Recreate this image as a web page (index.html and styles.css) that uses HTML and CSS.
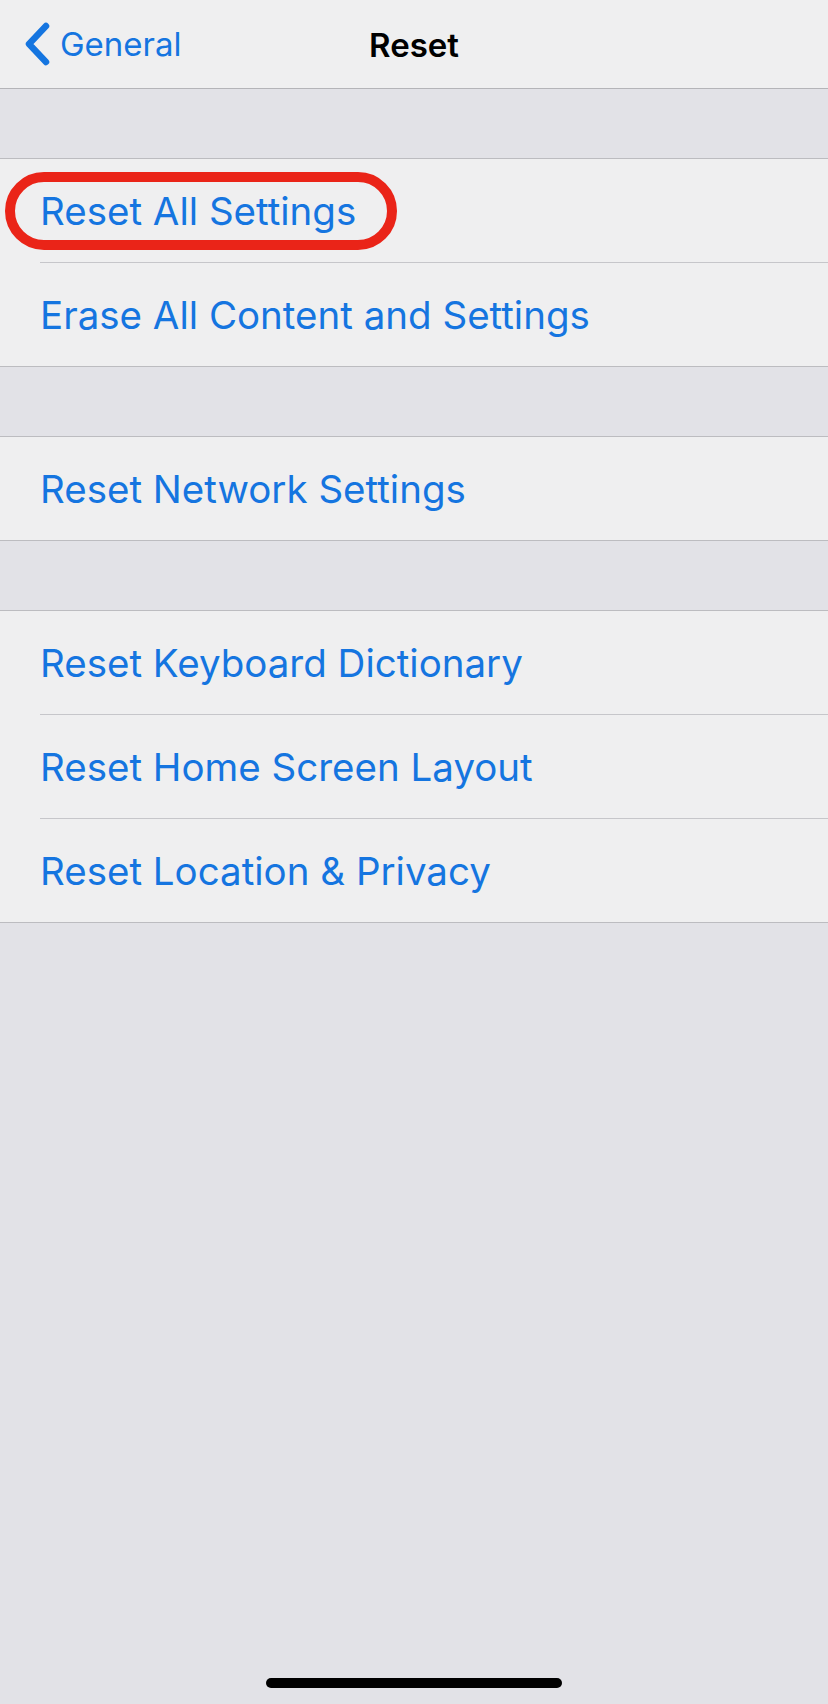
FILE: index.html
```html
<!DOCTYPE html>
<html lang="en">
<head>
    <meta charset="UTF-8">
    <meta name="viewport" content="width=device-width, initial-scale=1.0">
    <title>Reset</title>
    <link rel="stylesheet" href="styles.css">
</head>
<body>

    <div class="navbar">
        <div class="back">
            <svg class="chevron" width="28" height="44" viewBox="0 0 28 44">
                <path d="M22 4 L5 22 L22 40" fill="none" stroke="#1575e0" stroke-width="6.5" stroke-linecap="round" stroke-linejoin="round"/>
            </svg>
            <span>General</span>
        </div>
        <div class="title">Reset</div>
    </div>

    <div class="group">
        <div class="row highlighted">
            <span>Reset All Settings</span>
            <div class="circle"></div>
        </div>
        <div class="row">Erase All Content and Settings</div>
    </div>

    <div class="group">
        <div class="row">Reset Network Settings</div>
    </div>

    <div class="group">
        <div class="row">Reset Keyboard Dictionary</div>
        <div class="row">Reset Home Screen Layout</div>
        <div class="row">Reset Location &amp; Privacy</div>
    </div>

    <div class="home-indicator"></div>

</body>
</html>
```

FILE: styles.css
```css
* { margin: 0; padding: 0; box-sizing: border-box; font-family: 'Inter', 'Liberation Sans', sans-serif; }
body {
    background: #e2e2e7;
    width: 828px;
    height: 1704px;
    position: relative;
    overflow: hidden;
}
.navbar {
    height: 89px;
    background: #efeff0;
    border-bottom: 1px solid #b4b4b8;
    display: flex;
    align-items: center;
    justify-content: center;
    position: relative;
}
.back {
    position: absolute;
    left: 24px;
    top: 22px;
    display: flex;
    align-items: center;
    gap: 8px;
    color: #1575e0;
    font-size: 33px;
}
.chevron {
    display: block;
}
.title {
    font-size: 33px;
    font-weight: 600;
    color: #000;
    margin-top: 2px;
}

/* Grouped list */
.group {
    margin-top: 69px;
    background: #efeff0;
    border-top: 1px solid #bcbcc0;
    border-bottom: 1px solid #bcbcc0;
}
.row {
    height: 103px;
    display: flex;
    align-items: center;
    padding-left: 40px;
    color: #1575e0;
    font-size: 38.5px;
    position: relative;
}
.row + .row {
    height: 104px;
    border-top: 1px solid #c6c6ca;
    margin-left: 40px;
    padding-left: 0;
}
.highlighted .circle {
    position: absolute;
    left: 5px;
    top: 13px;
    width: 392px;
    height: 78px;
    border: 10px solid #ea2418;
    border-radius: 39px;
}

.home-indicator {
    position: absolute;
    left: 266px;
    top: 1678px;
    width: 296px;
    height: 10px;
    background: #000;
    border-radius: 5px;
}
```
